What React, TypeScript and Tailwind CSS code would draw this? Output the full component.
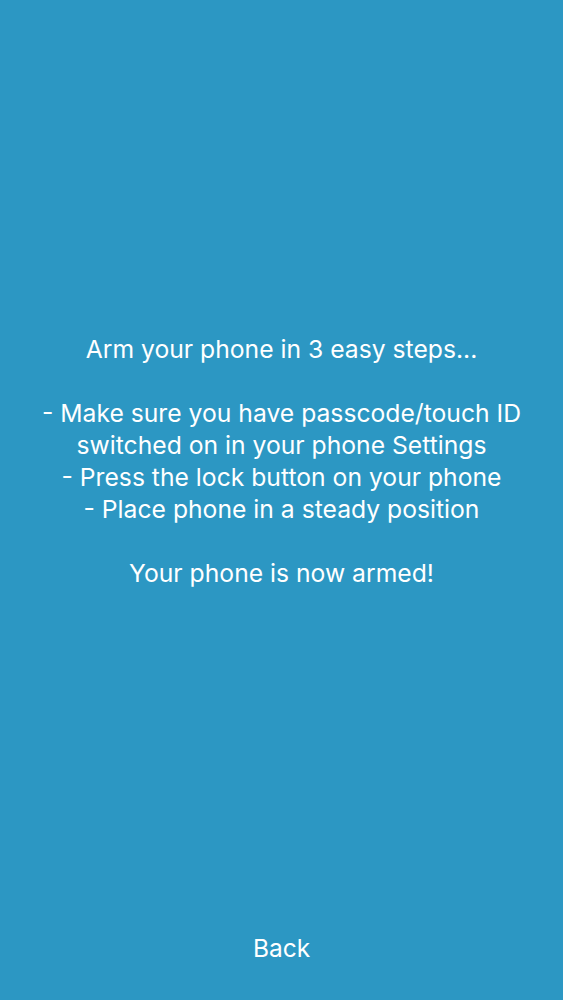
import React from 'react';

const steps = [
  '- Make sure you have passcode/touch ID switched on in your phone Settings',
  '- Press the lock button on your phone',
  '- Place phone in a steady position',
];

export default function App() {
  return (
    <div
      className="flex h-[1000px] w-full flex-col bg-[#2c97c3] text-white"
      style={{ fontFamily: 'Inter, "Open Sans", sans-serif' }}
    >
      {/* Instructions */}
      <div className="flex flex-1 items-center justify-center px-4">
        <div className="text-center text-[24.7px] leading-[32.1px]">
          <p>Arm your phone in 3 easy steps...</p>
          <p>&nbsp;</p>
          {steps.map(s => (
            <p key={s} className="mx-auto max-w-[500px]">{s}</p>
          ))}
          <p>&nbsp;</p>
          <p>Your phone is now armed!</p>
        </div>
      </div>

      {/* Footer */}
      <div className="flex h-[78px] justify-center">
        <button className="h-[52px] text-[24.5px] leading-[52px] text-white">Back</button>
      </div>
    </div>
  );
}
